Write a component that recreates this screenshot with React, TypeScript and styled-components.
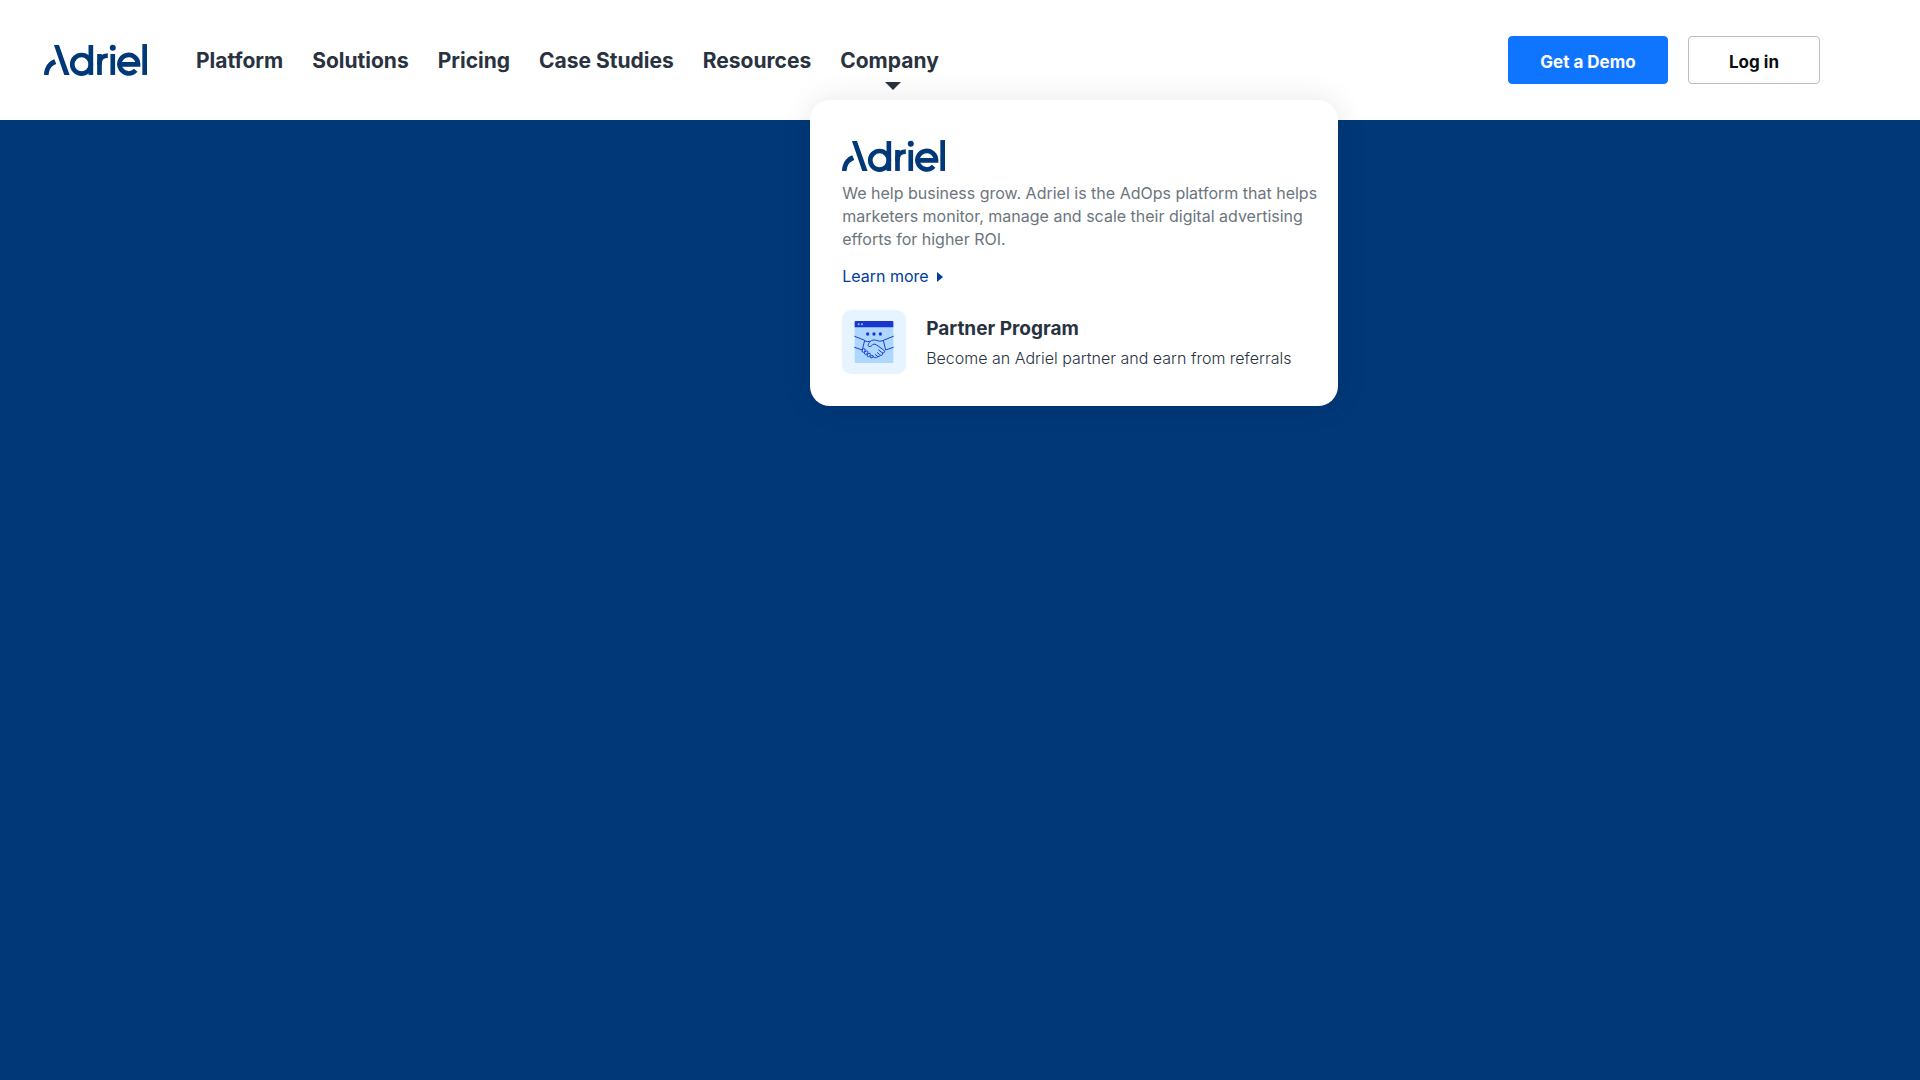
import React from "react";
import styled, { createGlobalStyle } from "styled-components";

const navy = "#003878";
const ink = "#29323f";

const GlobalStyle = createGlobalStyle`
  *, *::before, *::after { box-sizing: border-box; }
  body {
    margin: 0;
    min-height: 100vh;
    background: ${navy};
    font-family: Inter, "Liberation Sans", sans-serif;
    color: ${ink};
  }
  a { color: inherit; text-decoration: none; }
  p, h3 { margin: 0; }
`;

const Header = styled.header`
  display: flex;
  align-items: center;
  min-height: 120px;
  padding: 0 100px 0 44px;
  background: #fff;
`;

const LogoLink = styled.a`
  display: flex;
  color: ${navy};
`;

const NavList = styled.ul`
  display: flex;
  gap: 29px;
  margin: 0 0 0 49px;
  padding: 0;
  list-style: none;
`;

const NavItem = styled.li`
  position: relative;
`;

const NavLink = styled.a`
  display: block;
  padding-top: 2px;
  font-size: 21px;
  line-height: 32px;
  font-weight: 700;
  white-space: nowrap;
`;

const Caret = styled.span`
  position: absolute;
  top: 100%;
  left: 50%;
  margin: 5px 0 0 -4px;
  border: 8px solid transparent;
  border-top-color: ${ink};
  border-bottom: 0;
`;

const Actions = styled.div`
  display: flex;
  gap: 20px;
  margin-left: auto;
`;

const Button = styled.button<{ $primary?: boolean }>`
  min-width: ${(p) => (p.$primary ? 160 : 132)}px;
  height: 48px;
  padding: 3px 24px 0;
  border: 1px solid ${(p) => (p.$primary ? "#0f75ff" : "#b9bec4")};
  border-radius: 4px;
  background: ${(p) => (p.$primary ? "#0f75ff" : "#fff")};
  color: ${(p) => (p.$primary ? "#fff" : "#0b0d12")};
  font: 700 17px/24px Inter, "Liberation Sans", sans-serif;
  white-space: nowrap;
  cursor: pointer;
`;

const Panel = styled.section`
  position: absolute;
  top: 57px;
  left: -30px;
  width: 528px;
  padding: 40px 16px 32px 32px;
  border-radius: 20px;
  background: #fff;
  box-shadow: 0 0 30px rgba(0, 0, 0, 0.1);
`;

const About = styled.p`
  margin-top: 10px;
  font-size: 16px;
  line-height: 23px;
  color: #6c757d;
`;

const LearnMore = styled.a`
  display: inline-flex;
  align-items: center;
  gap: 8px;
  margin-top: 14px;
  font-size: 16px;
  line-height: 23px;
  color: #003c9c;

  &::after {
    content: "";
    border: 5px solid transparent;
    border-left: 6px solid currentColor;
    border-right: 0;
  }
`;

const Partner = styled.a`
  display: flex;
  align-items: center;
  gap: 20px;
  margin-top: 22px;
`;

const PartnerTitle = styled.h3`
  font-size: 19px;
  line-height: 32px;
  font-weight: 700;
`;

const PartnerText = styled.p`
  font-size: 16px;
  line-height: 26px;
  font-weight: 300;
`;

const Logo = () => (
  <svg width="103" height="32" viewBox="0 0 310 96" role="img" aria-label="Adriel" fill="none" stroke="currentColor" strokeWidth="14">
    <g fill="currentColor" stroke="none">
      <path d="M0 93C1 70 12 53 31 46L37 60C22 66 15 76 14 93Z" />
      <path d="M30 3H45L77 93H61Z" />
      <rect x="134" y="3" width="14" height="90" />
      <rect x="160" y="30" width="14" height="63" />
      <rect x="200" y="30" width="14" height="63" />
      <circle cx="207" cy="11" r="9" />
      <rect x="296" width="14" height="93" />
    </g>
    <circle cx="113" cy="61" r="28" />
    <path d="M167 62V58C167 44 177 35 192 35" />
    <path d="M228 61H283A28 28 0 1 0 276 79" />
  </svg>
);

const PartnerIcon = () => (
  <svg width="64" height="64" viewBox="0 0 192 192" aria-hidden="true">
    <rect width="192" height="192" rx="28" fill="#e6f4ff" />
    <rect x="38" y="33" width="116" height="126" rx="3" fill="#add7ff" />
    <path d="M38 52V36q0-3 3-3H151q3 0 3 3V52Z" fill="#1b36cf" />
    <g fill="#8cc4ff">
      <circle cx="50" cy="43" r="3" />
      <circle cx="60" cy="43" r="3" />
    </g>
    <g fill="#1b36cf">
      <circle cx="77" cy="72" r="5" />
      <circle cx="96" cy="72" r="5" />
      <circle cx="115" cy="72" r="5" />
    </g>
    <g fill="none" stroke="#1b40d0" strokeWidth="3" strokeLinecap="round" strokeLinejoin="round">
      <path d="M38 79L68 91L61 120L38 112M154 79L124 91L131 120L154 112" />
      <path d="M68 93Q77 97 84 94M124 92Q112 96 103 91Q95 88 88 92C80 98 76 106 80 109C86 112 91 105 93 103Q99 101 104 105L125 120Q131 126 125 129Q122 130 119 127L110 120M122 129Q123 135 118 136Q115 136 112 133L106 128M115 136Q113 141 108 140L100 134M108 140Q104 145 98 143L93 140" />
      <path d="M61 119Q64 114 69 117Q71 120 68 124Q65 129 61 126Q59 123 61 119ZM69 125Q73 120 77 124Q79 127 75 131Q71 136 68 132Q66 129 69 125ZM77 132Q81 127 85 131Q87 134 83 138Q79 142 76 139Q74 136 77 132ZM86 138Q90 134 94 138Q95 141 91 143Q86 145 84 142Z" />
    </g>
  </svg>
);

const links = ["Platform", "Solutions", "Pricing", "Case Studies", "Resources"];

export default function App() {
  return (
    <>
      <GlobalStyle />
      <Header>
        <LogoLink href="#"><Logo /></LogoLink>
        <nav>
          <NavList>
            {links.map((label) => (
              <NavItem key={label}><NavLink href="#">{label}</NavLink></NavItem>
            ))}
            <NavItem>
              <NavLink href="#" aria-expanded="true">Company</NavLink>
              <Caret />
              <Panel>
                <LogoLink href="#"><Logo /></LogoLink>
                <About>
                  We help business grow. Adriel is the AdOps platform that helps marketers monitor, manage and scale their digital advertising efforts for higher ROI.
                </About>
                <LearnMore href="#">Learn more</LearnMore>
                <Partner href="#">
                  <PartnerIcon />
                  <div>
                    <PartnerTitle>Partner Program</PartnerTitle>
                    <PartnerText>Become an Adriel partner and earn from referrals</PartnerText>
                  </div>
                </Partner>
              </Panel>
            </NavItem>
          </NavList>
        </nav>
        <Actions>
          <Button $primary>Get a Demo</Button>
          <Button>Log in</Button>
        </Actions>
      </Header>
    </>
  );
}
